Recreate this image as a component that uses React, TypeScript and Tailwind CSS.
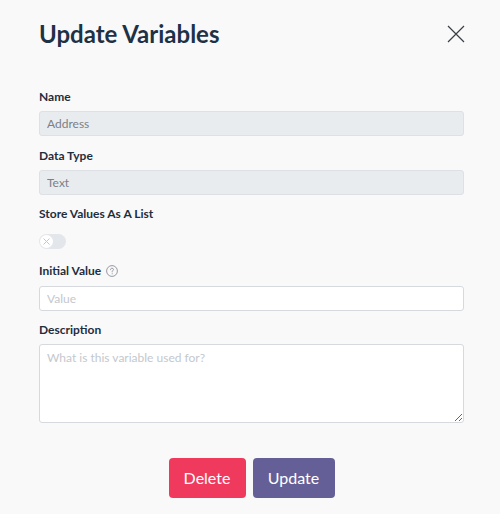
import { useState } from "react";

function Label({ children }: { children: React.ReactNode }) {
  return (
    <label className="flex h-4 items-center gap-1 text-[12px] font-bold leading-4 text-[#1f2d3d]">
      {children}
    </label>
  );
}

export default function App() {
  const [asList, setAsList] = useState(false);

  return (
    <div
      className="h-[514px] w-[500px] bg-[#f9f9f9] pl-[39px] pr-[36px] pt-[19px]"
      style={{ fontFamily: "Lato, 'Open Sans', sans-serif" }}
    >
      <div className="flex items-center justify-between">
        <h1 className="text-[24px] font-bold leading-[30px] text-[#1e3247]">Update Variables</h1>
        <button type="button" className="mr-[-1px] text-[#3a3f45]" aria-label="Close">
          <svg width="18" height="18" viewBox="0 0 18 18" fill="none" stroke="currentColor" strokeWidth="1.2">
            <path d="M1 1l16 16M17 1L1 17" />
          </svg>
        </button>
      </div>

      <form className="mt-[40px]" onSubmit={(e) => e.preventDefault()}>
        <Label>Name</Label>
        <input
          value="Address"
          readOnly
          className="mt-[6px] block h-[25px] w-full rounded-[3px] border border-[#dde0e4] bg-[#e9ecef] px-[7px] text-[12px] text-[#7b8087] outline-none"
        />

        <div className="mt-[12px]">
          <Label>Data Type</Label>
        </div>
        <input
          value="Text"
          readOnly
          className="mt-[6px] block h-[25px] w-full rounded-[3px] border border-[#dde0e4] bg-[#e9ecef] px-[7px] text-[12px] text-[#7b8087] outline-none"
        />

        <div className="mt-[11px]">
          <Label>Store Values As A List</Label>
        </div>
        <button
          type="button"
          onClick={() => setAsList(!asList)}
          className="mt-[12px] flex h-[15px] w-[27px] items-center rounded-full bg-[#e3e6ea] p-[1px]"
        >
          <span className="flex h-[13px] w-[13px] items-center justify-center rounded-full bg-white">
            <svg width="7" height="7" viewBox="0 0 7 7" stroke="#c3c7cc" strokeWidth="1">
              <path d="M0.5 0.5l6 6M6.5 0.5l-6 6" />
            </svg>
          </span>
        </button>

        <div className="mt-[14px]">
          <Label>
            Initial Value
            <svg width="12" height="12" viewBox="0 0 12 12" fill="none" className="ml-[1px]">
              <circle cx="6" cy="6" r="5.4" stroke="#8a9096" strokeWidth="0.9" />
              <path
                d="M4.5 4.7c0-.9.7-1.5 1.5-1.5s1.5.6 1.5 1.4c0 .9-1.3 1.1-1.3 2v.3"
                stroke="#8a9096"
                strokeWidth="0.9"
                strokeLinecap="round"
              />
              <circle cx="6.2" cy="8.7" r="0.55" fill="#8a9096" />
            </svg>
          </Label>
        </div>
        <input
          placeholder="Value"
          className="mt-[7px] block h-[25px] w-full rounded-[3px] border border-[#d6d9dd] bg-white px-[7px] text-[12px] text-[#333] outline-none placeholder:text-[#c4c8cd]"
        />

        <div className="mt-[11px]">
          <Label>Description</Label>
        </div>
        <textarea
          placeholder="What is this variable used for?"
          className="mt-[6px] block h-[79px] w-full rounded-[3px] border border-[#d6d9dd] bg-white px-[7px] py-[4px] text-[12px] text-[#333] outline-none placeholder:text-[#c4c8cd]"
        />

        <div className="mt-[35px] flex justify-center gap-[7px]">
          <button
            type="button"
            className="h-[40px] w-[77px] rounded-[4px] bg-[#ef3a5d] text-[16px] text-white"
          >
            Delete
          </button>
          <button
            type="submit"
            className="h-[40px] w-[82px] rounded-[4px] bg-[#655f98] text-[16px] text-white"
          >
            Update
          </button>
        </div>
      </form>
    </div>
  );
}
